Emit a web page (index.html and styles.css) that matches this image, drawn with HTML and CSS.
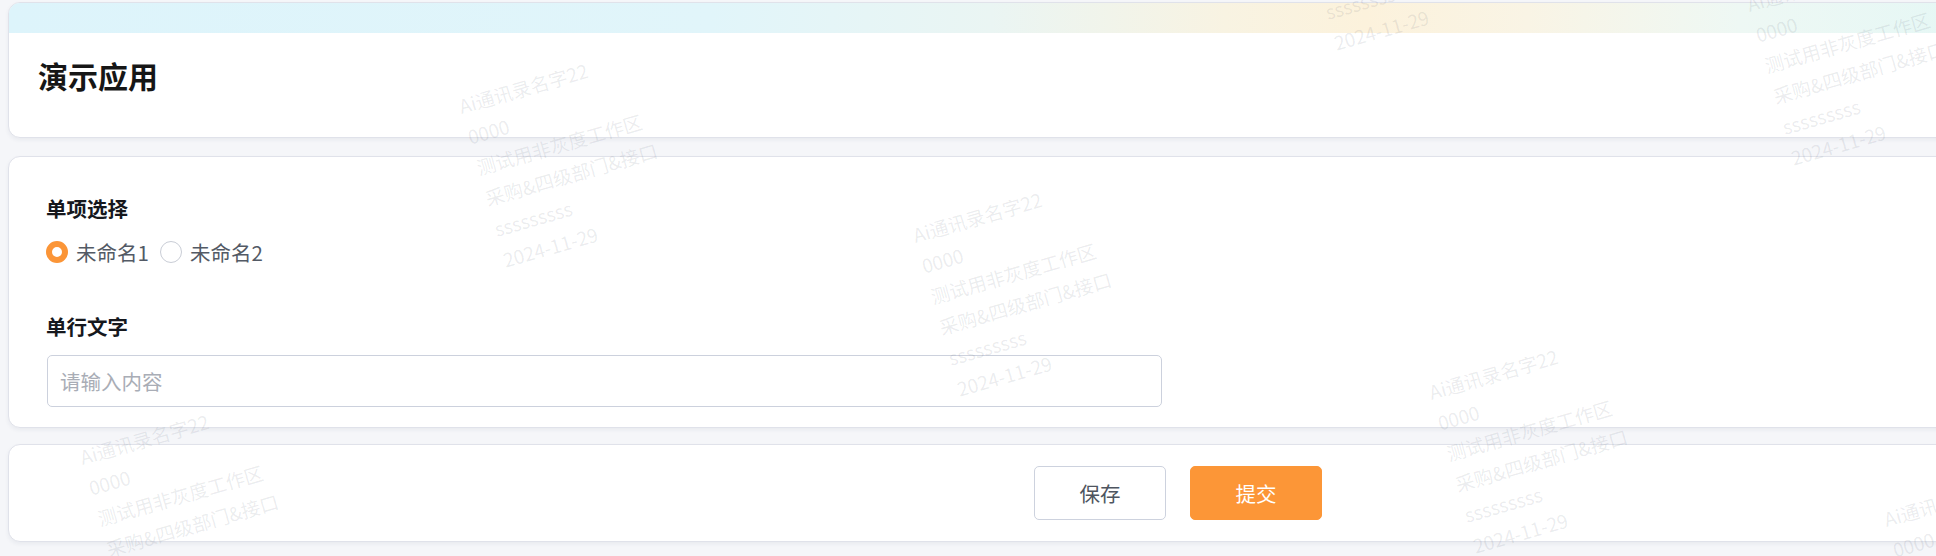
FILE: index.html
```html
<!DOCTYPE html>
<html lang="zh-CN">
<head>
<meta charset="utf-8">
<title>演示应用</title>
<link rel="stylesheet" href="styles.css">
</head>
<body>
<div class="page">
  <section class="card header-card">
    <div class="band"></div>
    <h1 class="title">演示应用</h1>
  </section>

  <section class="card form-card">
    <div class="form-item">
      <div class="label">单项选择</div>
      <div class="radios">
        <label class="radio checked"><span class="dot"></span><span class="radio-text">未命名1</span></label>
        <label class="radio"><span class="dot"></span><span class="radio-text">未命名2</span></label>
      </div>
    </div>
    <div class="form-item second">
      <div class="label">单行文字</div>
      <div class="input">请输入内容</div>
    </div>
  </section>

  <section class="card footer-card">
    <button class="btn btn-save">保存</button>
    <button class="btn btn-submit">提交</button>
  </section>

  <div class="wm wm1"><div>Ai通讯录名字22</div><div>0000</div><div>测试用非灰度工作区</div><div>采购&amp;四级部门&amp;接口</div><div>sssssssss</div><div>2024-11-29</div></div>
  <div class="wm wm2"><div>Ai通讯录名字22</div><div>0000</div><div>测试用非灰度工作区</div><div>采购&amp;四级部门&amp;接口</div><div>sssssssss</div><div>2024-11-29</div></div>
  <div class="wm wm3"><div>Ai通讯录名字22</div><div>0000</div><div>测试用非灰度工作区</div><div>采购&amp;四级部门&amp;接口</div><div>sssssssss</div><div>2024-11-29</div></div>
  <div class="wm wm4"><div>Ai通讯录名字22</div><div>0000</div><div>测试用非灰度工作区</div><div>采购&amp;四级部门&amp;接口</div><div>sssssssss</div><div>2024-11-29</div></div>
  <div class="wm wm5"><div>Ai通讯录名字22</div><div>0000</div><div>测试用非灰度工作区</div><div>采购&amp;四级部门&amp;接口</div><div>sssssssss</div><div>2024-11-29</div></div>
  <div class="wm wm6"><div>Ai通讯录名字22</div><div>0000</div><div>测试用非灰度工作区</div><div>采购&amp;四级部门&amp;接口</div><div>sssssssss</div><div>2024-11-29</div></div>
  <div class="wm wm7"><div>Ai通讯录名字22</div><div>0000</div><div>测试用非灰度工作区</div><div>采购&amp;四级部门&amp;接口</div><div>sssssssss</div><div>2024-11-29</div></div>
</div>
</body>
</html>
```

FILE: styles.css
```css
html, body {
  margin: 0;
  padding: 0;
  overflow: hidden;
  background: #f5f6f9;
  font-family: "Noto Sans CJK SC", "Noto Sans", "Liberation Sans", sans-serif;
}

.page {
  position: relative;
  width: 2340px;
  height: 556px;
  padding: 2px 0 0 8px;
  display: flex;
  flex-direction: column;
  overflow: hidden;
}

.card {
  background: #ffffff;
  border: 1px solid #e0e2ea;
  border-radius: 12px;
  box-shadow: 0 2px 4px rgba(40, 50, 90, 0.06);
  box-sizing: border-box;
  flex: none;
}

.header-card {
  height: 136px;
  overflow: hidden;
  display: flex;
  flex-direction: column;
}

.band {
  height: 30px;
  flex: none;
  background: linear-gradient(90deg, #ddf4fb 0%, #e1f5fa 30%, #eaf5f3 42%, #f8f3e2 52%, #fcf2dc 58%, #f9f4e5 65%, #eef8f4 74%, #e4f7f5 85%, #e4f6f6 100%);
}

.title {
  margin: 0;
  padding: 22px 0 0 29px;
  font-size: 30px;
  line-height: 40px;
  font-weight: 700;
  color: #161616;
}

.form-card {
  margin-top: 18px;
  height: 272px;
  padding: 37px 0 0 37px;
}

.label {
  font-size: 20.5px;
  line-height: 28px;
  font-weight: 700;
  color: #16181d;
}

.radios {
  display: flex;
  align-items: center;
  gap: 11px;
  margin-top: 16px;
  height: 28px;
}

.radio {
  display: flex;
  align-items: center;
  gap: 8px;
}

.dot {
  width: 22px;
  height: 22px;
  border-radius: 50%;
  border: 1px solid #c9cdd6;
  box-sizing: border-box;
  background: #fff;
}

.radio.checked .dot {
  border: 6px solid #fb9537;
}

.radio-text {
  font-size: 20.5px;
  line-height: 28px;
  color: #535a65;
}

.form-item.second {
  margin-top: 46px;
}

.input {
  margin-top: 15px;
  margin-left: 1px;
  width: 1115px;
  height: 52px;
  box-sizing: border-box;
  border: 1px solid #ccd1dd;
  border-radius: 5px;
  padding: 0 12px;
  display: flex;
  align-items: center;
  font-size: 20.5px;
  color: #a9adb6;
}

.footer-card {
  margin-top: 16px;
  height: 98px;
  display: flex;
  align-items: center;
  justify-content: center;
  gap: 24px;
}

.btn {
  width: 132px;
  height: 54px;
  border-radius: 5px;
  font-family: inherit;
  font-size: 20.5px;
  cursor: pointer;
}

.btn-save {
  background: #fff;
  border: 1px solid #cdd2de;
  color: #4e5560;
}

.btn-submit {
  background: #fc9637;
  border: 1px solid #fc9637;
  color: #ffffff;
}

.wm {
  position: absolute;
  transform: rotate(-16deg);
  transform-origin: 0 0;
  font-size: 19px;
  line-height: 32px;
  color: rgba(60, 70, 90, 0.10);
  white-space: nowrap;
  pointer-events: none;
  font-family: "Noto Sans CJK SC", "Noto Sans", sans-serif;
}

.wm1 { left: 455px; top: 91px; }
.wm2 { left: 909px; top: 220px; }
.wm3 { left: 1425px; top: 377px; }
.wm4 { left: 76px; top: 442px; }
.wm5 { left: 1286px; top: -126px; }
.wm6 { left: 1743px; top: -11px; }
.wm7 { left: 1880px; top: 504px; }
```
